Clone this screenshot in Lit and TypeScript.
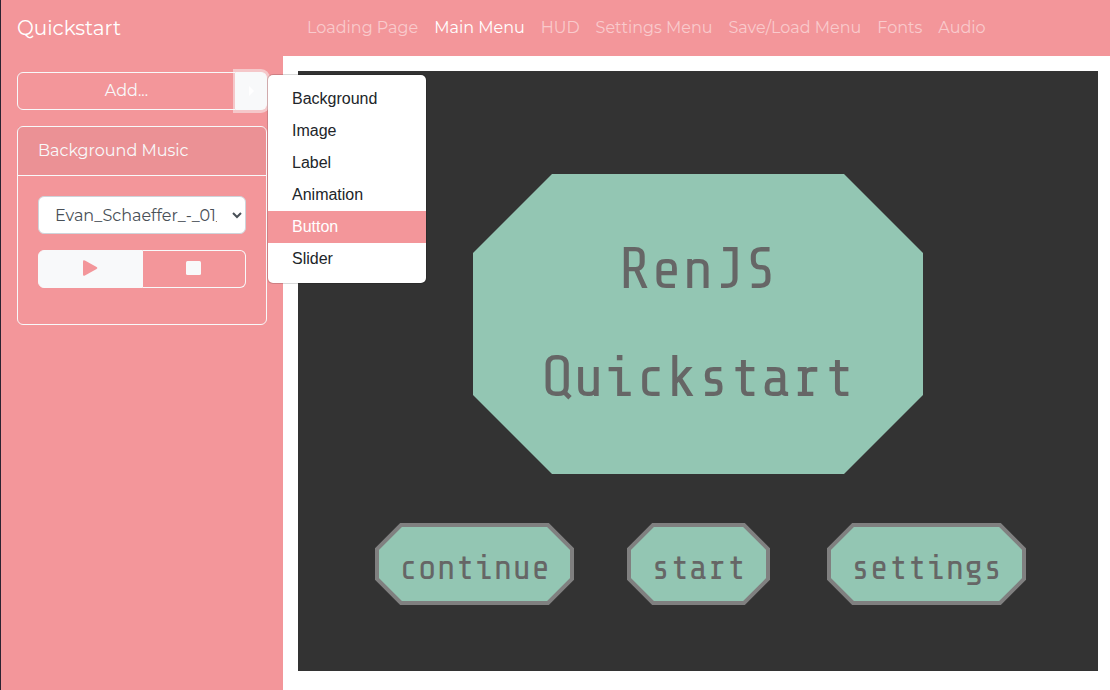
import { LitElement, html, css, svg } from "lit";
import { customElement, property, state } from "lit/decorators.js";
import { classMap } from "lit/directives/class-map.js";
import { styleMap } from "lit/directives/style-map.js";

interface StageItem {
  label: string;
  x: number;
  y: number;
  width: number;
  height: number;
}

const PAGES = ["Loading Page", "Main Menu", "HUD", "Settings Menu", "Save/Load Menu", "Fonts", "Audio"];
const ASSETS = ["Background", "Image", "Label", "Animation", "Button", "Slider"];
const BUTTONS: StageItem[] = [
  { label: "continue", x: 77, y: 452, width: 199, height: 82 },
  { label: "start", x: 329, y: 452, width: 143, height: 82 },
  { label: "settings", x: 529, y: 452, width: 199, height: 82 },
];

/* An octagon with 45 degree corners; inset leaves room for half the stroke. */
const octagon = (w: number, h: number, c: number, inset: number) => {
  const r = w - inset;
  const b = h - inset;
  return `${c},${inset} ${w - c},${inset} ${r},${c} ${r},${h - c} ${w - c},${b} ${c},${b} ${inset},${h - c} ${inset},${c}`;
};

@customElement("stage-preview")
export class StagePreview extends LitElement {
  static styles = css`
    :host {
      display: block;
      position: relative;
      aspect-ratio: 4 / 3;
      background: #333333;
      color: #666666;
      overflow: hidden;
    }
    .title,
    .item {
      position: absolute;
      display: grid;
      grid-template-columns: 100%;
      grid-template-rows: 100%;
      place-items: center;
      margin: 0;
      padding: 0;
      border: 0;
      background: none;
      color: inherit;
    }
    .title > *,
    .item > * {
      grid-area: 1 / 1;
    }
    .shape {
      display: block;
      width: 100%;
      height: 100%;
    }
    .panel {
      fill: #93c6b3;
    }
    .plate {
      fill: #93c6b3;
      stroke: #808080;
      stroke-width: 4;
    }
    .heading {
      margin: 0;
      font: 400 58px/108px "Share Tech Mono", "Liberation Mono", monospace;
      text-align: center;
    }
    .caption {
      padding-top: 8px;
      font: 400 35px/40px "Share Tech Mono", "Liberation Mono", monospace;
    }
    .item {
      cursor: pointer;
    }
  `;

  private place(i: StageItem) {
    return styleMap({
      left: `${(i.x / 800) * 100}%`,
      top: `${(i.y / 600) * 100}%`,
      width: `${i.width}px`,
      height: `${i.height}px`,
    });
  }

  render() {
    const title: StageItem = { label: "", x: 175, y: 103, width: 450, height: 300 };
    return html`
      <div class="title" style=${this.place(title)}>
        <svg class="shape" viewBox="0 0 450 300" aria-hidden="true">
          ${svg`<polygon class="panel" points=${octagon(450, 300, 79, 0)} />`}
        </svg>
        <h1 class="heading">RenJS<br />Quickstart</h1>
      </div>
      ${BUTTONS.map(
        (b) => html`
          <button class="item" type="button" style=${this.place(b)}>
            <svg class="shape" viewBox="0 0 ${b.width} ${b.height}" aria-hidden="true">
              ${svg`<polygon class="plate" points=${octagon(b.width, b.height, 26, 2)} />`}
            </svg>
            <span class="caption">${b.label}</span>
          </button>
        `
      )}
    `;
  }
}

@customElement("app-root")
export class AppRoot extends LitElement {
  @state() private page = "Main Menu";
  @state() private menuOpen = true;
  @property() highlighted = "Button";

  static styles = css`
    :host {
      display: grid;
      grid-template-columns: 282px minmax(0, 1fr);
      grid-template-rows: 56px auto;
      box-sizing: border-box;
      min-height: 100vh;
      border-left: 1px solid #2b2230;
      background: #ffffff;
      color: #f8f9fa;
      font: 400 16px/24px Montserrat, Inter, sans-serif;
    }
    * {
      box-sizing: border-box;
    }
    button,
    select {
      font: inherit;
    }
    .bar {
      grid-column: 1 / -1;
      display: grid;
      grid-template-columns: subgrid;
      align-items: center;
      background: #f3969a;
    }
    .brand {
      padding-left: 16px;
      color: #ffffff;
      font-size: 20px;
      text-decoration: none;
    }
    .nav {
      display: flex;
      gap: 16px;
      padding-left: 24px;
      white-space: nowrap;
    }
    .link {
      color: rgba(255, 255, 255, 0.5);
      text-decoration: none;
    }
    .link.active {
      color: #ffffff;
    }
    .side {
      display: flex;
      flex-direction: column;
      gap: 16px;
      padding: 16px;
      background: #f3969a;
    }
    .group {
      position: relative;
      display: flex;
    }
    .btn {
      flex: 1;
      display: flex;
      align-items: center;
      justify-content: center;
      height: 38px;
      padding: 0;
      border: 1px solid #f8f9fa;
      background: transparent;
      color: #f8f9fa;
      cursor: pointer;
    }
    .btn:first-child {
      border-radius: 6px 0 0 6px;
    }
    .btn.end {
      border-left: 0;
      border-radius: 0 6px 6px 0;
    }
    .btn.filled {
      background: #f8f9fa;
      color: #f3969a;
    }
    .btn.toggle {
      flex: 0 0 31px;
      color: #ffffff;
    }
    .btn.open {
      box-shadow: 0 0 0 3px rgba(248, 249, 250, 0.5);
    }
    .caret {
      width: 5px;
      height: 10px;
      fill: currentColor;
    }
    .icon {
      width: 16px;
      height: 16px;
      fill: currentColor;
      overflow: visible;
    }
    .menu {
      position: absolute;
      z-index: 2;
      top: 2px;
      left: 100%;
      width: 160px;
      margin: 0;
      padding: 8px 0;
      list-style: none;
      border: 1px solid rgba(0, 0, 0, 0.15);
      border-radius: 6px;
      background: #ffffff;
      background-clip: padding-box;
      font-family: "Liberation Sans", Arial, sans-serif;
    }
    .option {
      display: block;
      width: 100%;
      padding: 4px 24px;
      border: 0;
      background: transparent;
      color: #212529;
      text-align: left;
      cursor: pointer;
    }
    .option.current {
      background: #f3969a;
      color: #ffffff;
    }
    .card {
      border: 1px solid #f8f9fa;
      border-radius: 6px;
    }
    .card-title {
      display: block;
      padding: 12px 20px;
      border-bottom: 1px solid #f8f9fa;
      background: rgba(0, 0, 0, 0.03);
    }
    .card-body {
      display: flex;
      flex-direction: column;
      gap: 16px;
      padding: 20px 20px 36px;
    }
    .select {
      width: 100%;
      height: 38px;
      padding: 6px 12px;
      border: 1px solid #ced4da;
      border-radius: 6px;
      background: #ffffff;
      color: #495057;
    }
    .main {
      padding: 15px 12px 15px 15px;
    }
  `;

  render() {
    return html`
      <header class="bar">
        <a class="brand" href="#">Quickstart</a>
        <nav class="nav" aria-label="Pages">
          ${PAGES.map(
            (p) => html`<a
              href="#"
              class=${classMap({ link: true, active: p === this.page })}
              @click=${() => (this.page = p)}
              >${p}</a
            >`
          )}
        </nav>
      </header>

      <aside class="side">
        <div class="group">
          <button class="btn" type="button">Add...</button>
          <button
            class=${classMap({ btn: true, end: true, filled: true, toggle: true, open: this.menuOpen })}
            type="button"
            aria-label="Toggle add menu"
            aria-expanded=${this.menuOpen}
            @click=${() => (this.menuOpen = !this.menuOpen)}
          >
            <svg class="caret" viewBox="0 0 5 10" aria-hidden="true"><path d="M0 0L5 5L0 10Z" /></svg>
          </button>
          ${this.menuOpen
            ? html`<ul class="menu">
                ${ASSETS.map(
                  (a) => html`<li>
                    <button type="button" class=${classMap({ option: true, current: a === this.highlighted })}>${a}</button>
                  </li>`
                )}
              </ul>`
            : null}
        </div>

        <section class="card">
          <label class="card-title" for="music">Background Music</label>
          <div class="card-body">
            <select class="select" id="music">
              <option>Evan_Schaeffer_-_01_Glow</option>
            </select>
            <div class="group">
              <button class="btn filled" type="button" aria-label="Play">
                <svg class="icon" viewBox="0 1 16 16" aria-hidden="true">
                  <path d="M1 1.6Q1 -.5 2.9 .5L14.6 7Q16.3 8 14.6 9L2.9 15.5Q1 16.5 1 14.4Z" />
                </svg>
              </button>
              <button class="btn end" type="button" aria-label="Stop">
                <svg class="icon" viewBox="0 1 16 16" aria-hidden="true">
                  <rect x="0" y="1" width="15" height="14" rx="1.5" />
                </svg>
              </button>
            </div>
          </div>
        </section>
      </aside>

      <main class="main">
        <stage-preview></stage-preview>
      </main>
    `;
  }
}
